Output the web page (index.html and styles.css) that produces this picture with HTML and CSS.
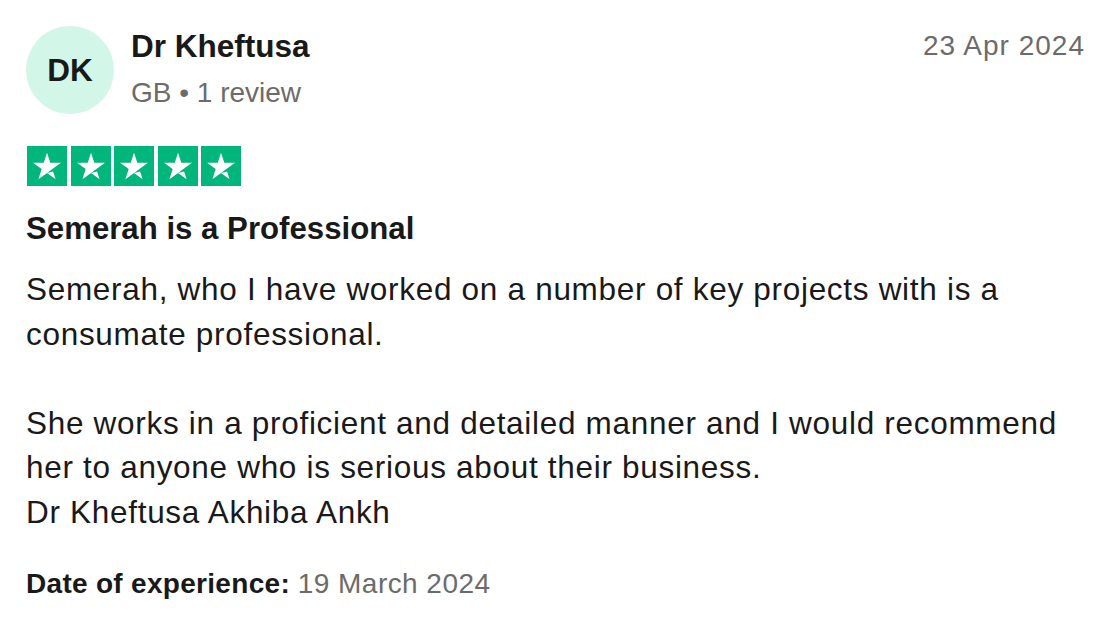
FILE: index.html
```html
<!DOCTYPE html>
<html lang="en">
<head>
<meta charset="utf-8">
<title>Review</title>
<link rel="stylesheet" href="styles.css">
</head>
<body>
<article class="review">
  <header class="review-header">
    <div class="avatar">DK</div>
    <div class="consumer">
      <div class="consumer-name">Dr Kheftusa</div>
      <div class="consumer-meta">GB <span class="dot">•</span> 1 review</div>
    </div>
    <time class="review-date">23 Apr 2024</time>
  </header>

  <div class="stars" aria-label="Rated 5 out of 5">
    <svg class="star" viewBox="0 0 96 96"><rect width="96" height="96" fill="#00b67a"/><path d="M48.03 64.69L62.63 61L68.73 79.8L48.03 64.69ZM81.63 40.39H55.93L48.03 16.2L40.13 40.39H14.43L35.23 55.39L27.33 79.59L48.13 64.59L60.93 55.39L81.63 40.39Z" fill="#fff"/></svg>
    <svg class="star" viewBox="0 0 96 96"><rect width="96" height="96" fill="#00b67a"/><path d="M48.03 64.69L62.63 61L68.73 79.8L48.03 64.69ZM81.63 40.39H55.93L48.03 16.2L40.13 40.39H14.43L35.23 55.39L27.33 79.59L48.13 64.59L60.93 55.39L81.63 40.39Z" fill="#fff"/></svg>
    <svg class="star" viewBox="0 0 96 96"><rect width="96" height="96" fill="#00b67a"/><path d="M48.03 64.69L62.63 61L68.73 79.8L48.03 64.69ZM81.63 40.39H55.93L48.03 16.2L40.13 40.39H14.43L35.23 55.39L27.33 79.59L48.13 64.59L60.93 55.39L81.63 40.39Z" fill="#fff"/></svg>
    <svg class="star" viewBox="0 0 96 96"><rect width="96" height="96" fill="#00b67a"/><path d="M48.03 64.69L62.63 61L68.73 79.8L48.03 64.69ZM81.63 40.39H55.93L48.03 16.2L40.13 40.39H14.43L35.23 55.39L27.33 79.59L48.13 64.59L60.93 55.39L81.63 40.39Z" fill="#fff"/></svg>
    <svg class="star" viewBox="0 0 96 96"><rect width="96" height="96" fill="#00b67a"/><path d="M48.03 64.69L62.63 61L68.73 79.8L48.03 64.69ZM81.63 40.39H55.93L48.03 16.2L40.13 40.39H14.43L35.23 55.39L27.33 79.59L48.13 64.59L60.93 55.39L81.63 40.39Z" fill="#fff"/></svg>
  </div>

  <h2 class="review-title">Semerah is a Professional</h2>
  <p class="review-text">Semerah, who I have worked on a number of key projects with is a consumate professional.<br><br>She works in a proficient and detailed manner and I would recommend her to anyone who is serious about their business.<br>Dr Kheftusa Akhiba Ankh</p>

  <p class="experience"><strong>Date of experience:</strong> <span class="experience-date">19 March 2024</span></p>
</article>
</body>
</html>
```
FILE: styles.css
```css
* { box-sizing: border-box; }

html, body {
  margin: 0;
  padding: 0;
  background: #ffffff;
}

body {
  font-family: "Liberation Sans", Arial, Helvetica, sans-serif;
  color: #191919;
}

.review {
  width: 1110px;
  padding: 26px 26px 0 26px;
}

.review-header {
  display: flex;
  align-items: flex-start;
}

.avatar {
  flex: 0 0 88px;
  width: 88px;
  height: 88px;
  border-radius: 50%;
  background: #d2f6e8;
  color: #191919;
  display: flex;
  align-items: center;
  justify-content: center;
  font-weight: 700;
  font-size: 31.5px;
  line-height: 1;
  padding-top: 1px;
}

.consumer {
  flex: 1 1 auto;
  margin-left: 17px;
}

.consumer-name {
  font-size: 31.5px;
  line-height: 40px;
  font-weight: 700;
}

.consumer-meta {
  margin-top: 9px;
  font-size: 28px;
  line-height: 36px;
  color: #6b6b6b;
}

.review-date {
  margin-top: 2px;
  font-size: 28px;
  line-height: 36px;
  letter-spacing: 1px;
  margin-right: -1px;
  color: #6b6b6b;
  white-space: nowrap;
}

.stars {
  display: flex;
  gap: 3.5px;
  margin-top: 32px;
  padding-left: 1px;
}

.star {
  width: 40px;
  height: 40px;
  display: block;
}

.review-title {
  margin: 23px 0 0 0;
  font-size: 31.2px;
  line-height: 40px;
  font-weight: 700;
}

.review-text {
  margin: 18px 0 0 0;
  font-size: 31.5px;
  line-height: 44.5px;
  letter-spacing: 0.7px;
}

.experience {
  margin: 32px 0 0 0;
  font-size: 28px;
  line-height: 36px;
}

.experience strong {
  font-weight: 700;
  letter-spacing: 0.3px;
}

.experience-date {
  color: #6b6b6b;
  letter-spacing: 0.45px;
}
```
